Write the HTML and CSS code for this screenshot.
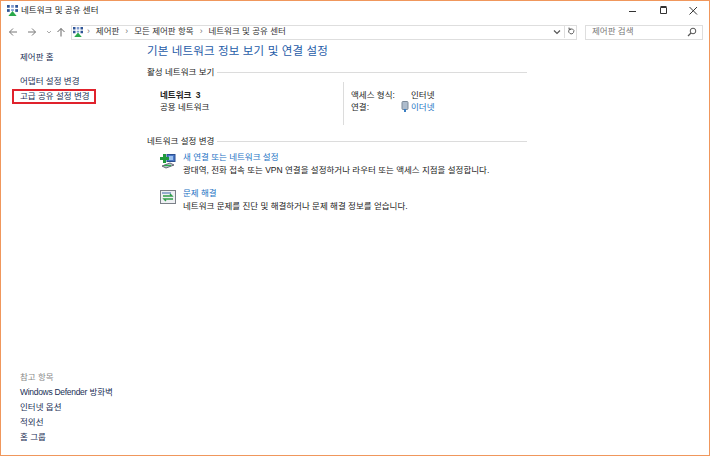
FILE: index.html
```html
<!DOCTYPE html>
<html lang="ko">
<head>
<meta charset="utf-8">
<title>네트워크 및 공유 센터</title>
<link rel="stylesheet" href="styles.css">
</head>
<body>
<svg class="defs" width="0" height="0" aria-hidden="true">
  <symbol id="net" viewBox="0 0 12 12">
    <rect x="0" y="0" width="3" height="3" fill="#2f5597"/><rect x="4.500" y="0" width="3" height="3" fill="#7f9bd0"/><rect x="9" y="0" width="3" height="3" fill="#2f5597"/>
    <rect x="0" y="4.500" width="3" height="3" fill="#2f5597"/><rect x="4.500" y="4.500" width="3" height="2" fill="#7f9bd0"/><rect x="9" y="4.500" width="3" height="3" fill="#2f5597"/>
    <path d="M6 6.500L10.500 12h-9z" fill="#29a84a"/>
  </symbol>
</svg>
<div class="window">
  <header class="titlebar">
    <svg class="ico-title"><use href="#net"/></svg>
    <span class="title">네트워크 및 공유 센터</span>
    <div class="caption">
      <svg width="12" height="12" viewBox="0 0 12 12"><path d="M1 6.500h7" stroke="#333" fill="none"/></svg>
      <svg width="12" height="12" viewBox="0 0 12 12"><path d="M2.500 2.500h6v6h-6zM2.500 1.500h6" stroke="#333" fill="none"/></svg>
      <svg width="12" height="12" viewBox="0 0 12 12"><path d="M1.500 2l7.500 7.500M9 2l-7.500 7.500" stroke="#333" fill="none"/></svg>
    </div>
  </header>
  <nav class="navbar">
    <div class="navbtns">
      <svg width="10" height="10" viewBox="0 0 10 10"><path d="M9 5H1.500M5 1.500L1.500 5 5 8.500" stroke="#777" fill="none"/></svg>
      <svg width="10" height="10" viewBox="0 0 10 10"><path d="M1 5h7.500M5 1.500L8.500 5 5 8.500" stroke="#777" fill="none"/></svg>
      <svg class="chev" width="6" height="10" viewBox="0 0 6 10"><path d="M1 4l2 2 2-2" stroke="#aaa" fill="none"/></svg>
      <svg width="10" height="10" viewBox="0 0 10 10"><path d="M5 9.500V1.500M1.500 5L5 1.500 8.500 5" stroke="#666" fill="none"/></svg>
    </div>
    <div class="addr">
      <svg class="addr-ico"><use href="#net"/></svg>
      <span class="sep">›</span><span>제어판</span>
      <span class="sep">›</span><span>모든 제어판 항목</span>
      <span class="sep">›</span><span>네트워크 및 공유 센터</span>
      <span class="addr-end">
        <svg width="8" height="8" viewBox="0 0 8 8"><path d="M1 2.500l3 3 3-3" stroke="#555" fill="none" stroke-width="1.200"/></svg>
        <span class="refresh"><svg width="10" height="10" viewBox="0 0 10 10"><path d="M3 2h3.500a2.600 2.600 0 1 1-3.500 1M3 .5V2.500h2" stroke="#666" fill="none"/></svg></span>
      </span>
    </div>
    <div class="search">
      <span>제어판 검색</span>
      <svg width="10" height="10" viewBox="0 0 10 10"><circle cx="6" cy="4" r="2.800" stroke="#555" fill="none"/><path d="M4 6L1 9" stroke="#555" stroke-width="1.300"/></svg>
    </div>
  </nav>
  <div class="body">
    <aside class="side">
      <div class="side-top">
        <a class="side-link home">제어판 홈</a>
        <a class="side-link">어댑터 설정 변경</a>
        <a class="side-link marked">고급 공유 설정 변경</a>
      </div>
      <div class="side-bottom">
        <div class="see-also">참고 항목</div>
        <a class="side-link"><span class="latin">Windows Defender</span> 방화벽</a>
        <a class="side-link">인터넷 옵션</a>
        <a class="side-link">적외선</a>
        <a class="side-link">홈 그룹</a>
      </div>
    </aside>
    <main class="main">
      <h1>기본 네트워크 정보 보기 및 연결 설정</h1>
      <div class="group-head"><span>활성 네트워크 보기</span><i></i></div>
      <section class="active">
        <div class="net-name">
          <strong>네트워크 3</strong>
          <span>공용 네트워크</span>
        </div>
        <dl class="net-info">
          <dt>액세스 형식:</dt><dd>인터넷</dd>
          <dt>연결:</dt>
          <dd class="conn">
            <svg width="8" height="12" viewBox="0 0 8 12"><rect x="1" y="0.500" width="6" height="8" rx="1" fill="#aebccc" stroke="#7d8a99"/><path d="M4 8v3" stroke="#3a7fc4" stroke-width="2"/></svg>
            <a>이더넷</a>
          </dd>
        </dl>
      </section>
      <div class="group-head second"><span>네트워크 설정 변경</span><i></i></div>
      <div class="task">
        <svg width="16" height="16" viewBox="0 0 16 16"><rect x="7" y="1.500" width="8" height="7" fill="#4a78c8" stroke="#2b4f8f"/><rect x="9" y="3" width="4" height="4" fill="#9cc0ee"/><path d="M0 4h3V1h3v3h3v3H6v3H3V7H0z" fill="#1f9a3c"/><path d="M2 13l8-3 4 2-8 3z" fill="#c8ced6" stroke="#667"/><path d="M4 12.500h7" stroke="#2da84f" stroke-width="1.300"/></svg>
        <div>
          <a>새 연결 또는 네트워크 설정</a>
          <p>광대역, 전화 접속 또는 VPN 연결을 설정하거나 라우터 또는 액세스 지점을 설정합니다.</p>
        </div>
      </div>
      <div class="task task2">
        <svg width="16" height="16" viewBox="0 0 16 16"><rect x="0.500" y="1.500" width="15" height="13" fill="#eef0f3" stroke="#7b8088"/><path d="M3 7h9l-2-2M13 10H4l2 2" fill="none" stroke="#2f9c4a" stroke-width="1.400"/><path d="M2 4h9" stroke="#3b66a8"/></svg>
        <div>
          <a>문제 해결</a>
          <p>네트워크 문제를 진단 및 해결하거나 문제 해결 정보를 얻습니다.</p>
        </div>
      </div>
    </main>
  </div>
</div>
</body>
</html>
```
FILE: styles.css
```css
* { box-sizing: border-box; }
html, body { margin: 0; padding: 0; background: #fff; }
body { font: 8.500px/15px "Liberation Sans", "Noto Sans CJK KR", sans-serif; color: #222; }
.defs { position: absolute; }
.window { width: 710px; height: 456px; border: 1px solid #f0975c; display: flex; flex-direction: column; overflow: hidden; }
.titlebar { height: 19px; display: flex; align-items: center; padding: 0 0 1px 6px; gap: 3px; flex: none; }
.ico-title { width: 11px; height: 11px; flex: none; }
.title { color: #222; }
.caption { margin-left: auto; display: flex; gap: 18px; margin-right: 9px; margin-top: 1px; }
.navbar { height: 16px; margin-top: 4px; display: flex; align-items: center; flex: none; padding-left: 7px; }
.navbtns { width: 63px; display: flex; align-items: center; gap: 9px; }
.chev { margin-right: -5px; }
.addr { width: 506px; height: 15px; border: 1px solid #dedede; display: flex; align-items: center; color: #333; padding: 0 0 1px 0; }
.addr-ico { width: 10px; height: 10px; flex: none; margin-left: 1px; margin-right: -2px; }
.sep { margin: 0 6px; color: #777; }
.addr-end { margin-left: auto; display: flex; align-items: center; height: 100%; gap: 3px; }
.refresh { border-left: 1px solid #dedede; width: 12px; height: 100%; display: flex; align-items: center; justify-content: center; }
.search { width: 118px; height: 15px; margin-left: 8px; border: 1px solid #dedede; display: flex; align-items: center; justify-content: space-between; padding: 0 5px 1px 6px; color: #777; }
.body { flex: 1; display: flex; min-height: 0; }
.side { width: 146px; padding: 10px 0 10px 19px; display: flex; flex-direction: column; justify-content: space-between; flex: none; }
.side-top, .side-bottom { display: flex; flex-direction: column; }
.side-link { color: #1a2f56; display: block; white-space: nowrap; height: 15px; }
.latin { letter-spacing: -.3px; }
.home { margin-bottom: 9px; }
.marked { border: 2px solid #e0222c; width: 84px; margin-left: -8px; padding-left: 6px; line-height: 11px; }
.see-also { color: #8a8a8a; height: 15px; }
.main { flex: 1; }
h1 { margin: 2px 0 0; font-size: 11.500px; line-height: 18px; font-weight: 400; color: #1f5ca8; letter-spacing: .15px; }
.group-head { display: flex; align-items: center; width: 380px; margin-top: 5px; }
.group-head i { flex: 1; height: 1px; background: #dcdcdc; margin-left: 3px; }
.second { margin-top: 9px; }
.active { display: flex; width: 380px; height: 43px; margin-top: 2px; }
.net-name { width: 197px; padding: 7px 0 0 13px; display: flex; flex-direction: column; border-right: 1px solid #dcdcdc; }
.net-name strong { font-weight: 700; word-spacing: 2px; line-height: 12px; }
.net-name span { line-height: 12px; }
.net-info { margin: 0; padding: 7px 0 0 7px; display: grid; grid-template-columns: 60px auto; grid-auto-rows: 12px; line-height: 12px; align-content: start; }
.net-info dd { margin: 0; }
.conn { display: flex; align-items: center; gap: 2px; margin-left: -10px !important; }
.task a, .conn a { color: #1a72c4; }
.task { display: flex; margin: 2px 0 0 13px; gap: 7px; align-items: flex-start; }
.task svg { flex: none; margin-top: 2px; }
.task a { display: block; line-height: 13px; }
.task p { margin: 0; line-height: 13px; white-space: nowrap; }
.task2 { margin-top: 10px; }
```
